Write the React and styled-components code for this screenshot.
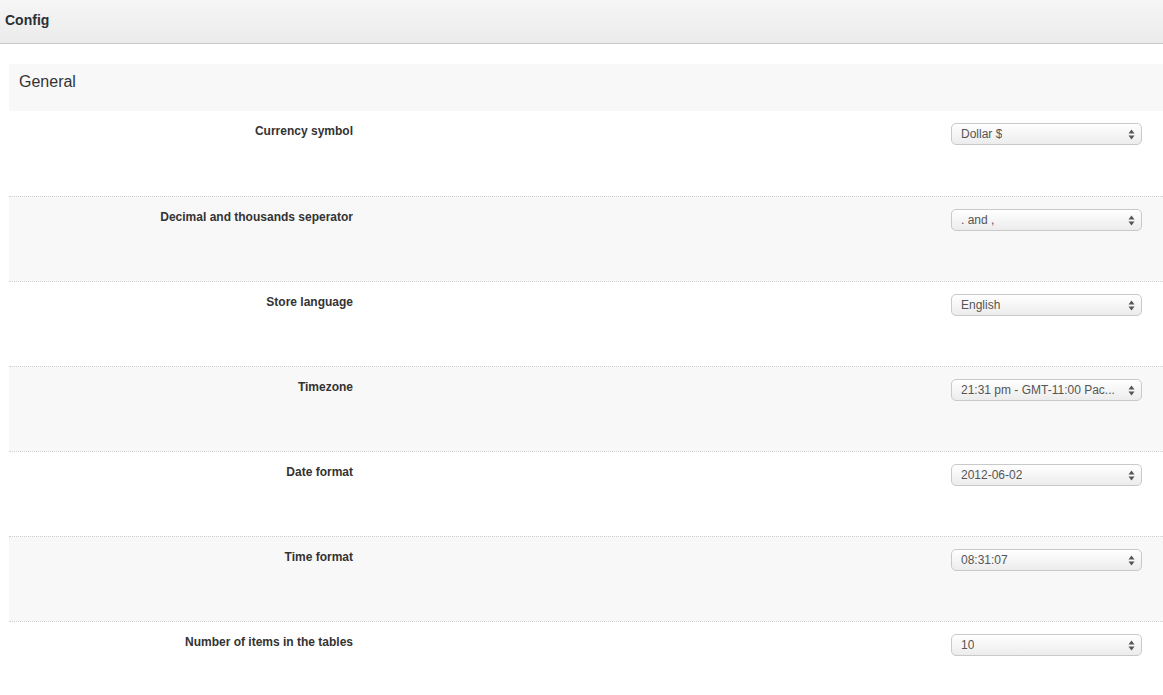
import React from "react";
import styled, { createGlobalStyle } from "styled-components";

const Global = createGlobalStyle`
  html, body { margin: 0; padding: 0; background: #fff; }
  body { font-family: "Liberation Sans", Arial, sans-serif; color: #333; }
`;

const Header = styled.header`
  height: 43px;
  box-sizing: content-box;
  border-bottom: 1px solid #c8c8c8;
  background: linear-gradient(#f6f6f6, #ebebeb);
  display: flex;
  align-items: center;
  padding: 0 0 0 5px;
`;

const Title = styled.h1`
  margin: 0 0 4px 0;
  font-size: 14px;
  font-weight: bold;
  color: #2b2f36;
`;

const Content = styled.main`
  padding: 20px 0 0 9px;
`;

const SectionHead = styled.div`
  height: 47px;
  background: #f8f8f8;
  display: flex;
  align-items: flex-start;
  padding: 9px 0 0 10px;
  box-sizing: border-box;
  font-size: 16px;
  color: #333;
`;

const Row = styled.div`
  height: 85px;
  box-sizing: border-box;
  display: grid;
  grid-template-columns: 344px 1fr 191px;
  padding: 13px 21px 0 0;
  background: ${(p) => (p.$alt ? "#f8f8f8" : "#fff")};
  border-top: ${(p) => (p.$first ? "none" : "1px dotted #cfcfcf")};
`;

const Label = styled.label`
  grid-column: 1;
  text-align: right;
  font-size: 12px;
  font-weight: bold;
  line-height: 15px;
  color: #333;
`;

const SelectBox = styled.div`
  grid-column: 3;
  margin-top: -1px;
  height: 22px;
  box-sizing: border-box;
  border: 1px solid #c9c9c9;
  border-radius: 5px;
  background: linear-gradient(#ffffff, #ececec);
  display: flex;
  align-items: center;
  justify-content: space-between;
  padding: 0 6px 0 9px;
  font-size: 12px;
  color: #555;
  white-space: nowrap;
  overflow: hidden;
`;

const Value = styled.span`
  overflow: hidden;
`;

const Arrows = () => (
  <svg width="7" height="11" viewBox="0 0 7 11">
    <path d="M3.5 0.5 L6.5 4.5 L0.5 4.5 Z" fill="#555" />
    <path d="M3.5 10.5 L6.5 6.5 L0.5 6.5 Z" fill="#555" />
  </svg>
);

const rows = [
  ["Currency symbol", "Dollar $"],
  ["Decimal and thousands seperator", ". and ,"],
  ["Store language", "English"],
  ["Timezone", "21:31 pm - GMT-11:00 Pac..."],
  ["Date format", "2012-06-02"],
  ["Time format", "08:31:07"],
  ["Number of items in the tables", "10"],
];

export default function App() {
  return (
    <>
      <Global />
      <Header>
        <Title>Config</Title>
      </Header>
      <Content>
        <SectionHead>General</SectionHead>
        {rows.map(([label, value], i) => (
          <Row key={label} $alt={i % 2 === 1} $first={i === 0}>
            <Label>{label}</Label>
            <SelectBox>
              <Value>{value}</Value>
              <Arrows />
            </SelectBox>
          </Row>
        ))}
      </Content>
    </>
  );
}
